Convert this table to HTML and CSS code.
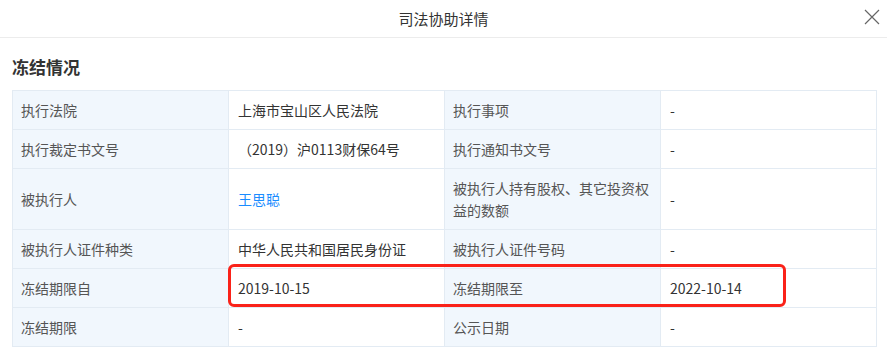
FILE: index.html
```html
<!DOCTYPE html>
<html lang="zh-CN">
<head>
    <meta charset="UTF-8">
    <meta name="viewport" content="width=device-width, initial-scale=1.0">
    <title>司法协助详情</title>
    <link rel="stylesheet" href="styles.css">
</head>
<body>
    <div class="modal">
        <header class="modal-header">
            <h1>司法协助详情</h1>
            <button class="close-button" aria-label="关闭">
                <svg width="16" height="16" viewBox="0 0 16 16">
                    <path d="M1 1 L15 15 M15 1 L1 15" stroke="#666" stroke-width="1.2" fill="none"/>
                </svg>
            </button>
        </header>

        <div class="modal-body">
            <h2>冻结情况</h2>

            <div class="table-wrap">
                <table class="detail-table">
                    <tr>
                        <td class="label">执行法院</td>
                        <td>上海市宝山区人民法院</td>
                        <td class="label">执行事项</td>
                        <td>-</td>
                    </tr>
                    <tr>
                        <td class="label">执行裁定书文号</td>
                        <td>（2019）沪0113财保64号</td>
                        <td class="label">执行通知书文号</td>
                        <td>-</td>
                    </tr>
                    <tr>
                        <td class="label">被执行人</td>
                        <td><a href="#" class="person">王思聪</a></td>
                        <td class="label">被执行人持有股权、其它投资权益的数额</td>
                        <td>-</td>
                    </tr>
                    <tr>
                        <td class="label">被执行人证件种类</td>
                        <td>中华人民共和国居民身份证</td>
                        <td class="label">被执行人证件号码</td>
                        <td>-</td>
                    </tr>
                    <tr class="marked">
                        <td class="label">冻结期限自</td>
                        <td>2019-10-15</td>
                        <td class="label">冻结期限至</td>
                        <td>2022-10-14</td>
                    </tr>
                    <tr>
                        <td class="label">冻结期限</td>
                        <td>-</td>
                        <td class="label">公示日期</td>
                        <td>-</td>
                    </tr>
                </table>
                <!-- red annotation round the freeze period -->
                <div class="highlight"></div>
            </div>
        </div>
    </div>
</body>
</html>
```

FILE: styles.css
```css
body {
    margin: 0;
    background: #fff;
    color: #333;
    font-family: "Noto Sans CJK SC", "Liberation Sans", sans-serif;
    font-size: 14px;
}

.modal-header {
    position: relative;
    height: 37px;
    border-bottom: 1px solid #ececec;
    display: flex;
    align-items: center;
    justify-content: center;
}

.modal-header h1 {
    margin: 0;
    font-size: 15px;
    font-weight: normal;
    color: #333;
}

.close-button {
    position: absolute;
    right: 7px;
    top: 9px;
    padding: 0;
    border: none;
    background: none;
    cursor: pointer;
}

.modal-body {
    padding: 0 10px 0 12px;
}

.modal-body h2 {
    margin: 0;
    padding: 18px 0 12px;
    font-size: 17px;
    line-height: 22px;
    font-weight: bold;
    color: #333;
}

.table-wrap {
    position: relative;
}

.detail-table {
    width: 100%;
    border-collapse: collapse;
    table-layout: fixed;
}

.detail-table td {
    border: 1px solid #e3ebf3;
    padding: 8px 9px;
    line-height: 22px;
    color: #333;
    vertical-align: middle;
}

.detail-table td.label {
    background: #f1f7fd;
    color: #555;
    padding-left: 8px;
}

.person {
    color: #1a8cff;
    text-decoration: none;
}

.highlight {
    position: absolute;
    left: 216px;
    top: 174px;
    width: 552px;
    height: 37px;
    border: 3px solid #fa2219;
    border-radius: 6px;
}
```
